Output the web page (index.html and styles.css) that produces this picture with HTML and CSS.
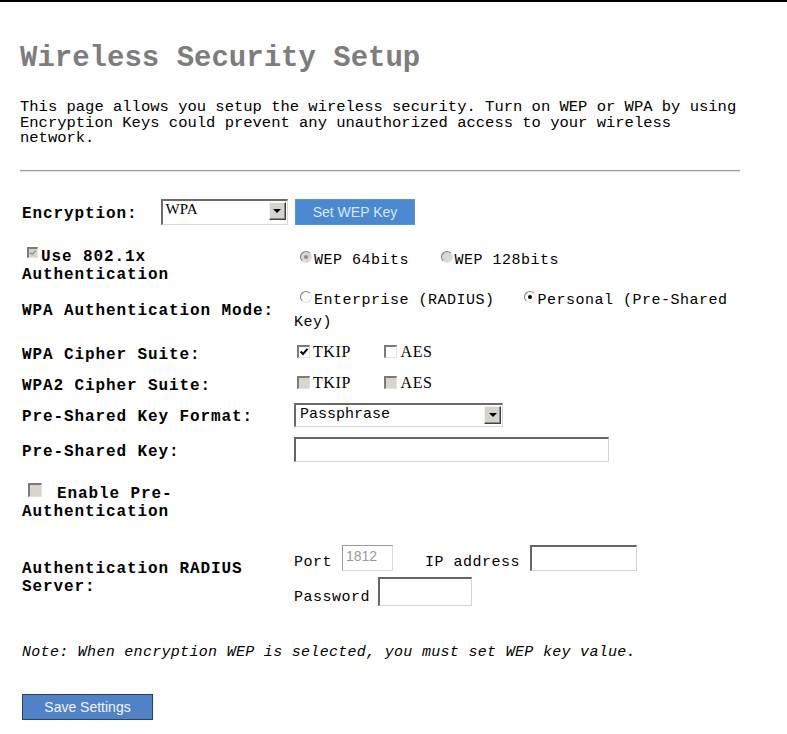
FILE: index.html
```html
<!DOCTYPE html>
<html>
<head>
<meta charset="utf-8">
<title>Wireless Security Setup</title>
<link rel="stylesheet" href="styles.css">
</head>
<body>
<div class="page">
  <h1 class="title">Wireless Security Setup</h1>
  <p class="intro">This page allows you setup the wireless security. Turn on WEP or WPA by using Encryption Keys could prevent any unauthorized access to your wireless network.</p>
  <div class="rule"></div>

  <div class="form">
    <div class="row r-enc">
      <div class="label enc-label">
        <span class="lt">Encryption:</span>
        <span class="sel sel-enc"><span class="sel-text">WPA</span><span class="arr"><i></i></span></span>
      </div>
      <div class="value"><span class="btn btn-wep">Set WEP Key</span></div>
    </div>

    <div class="row r-8021x">
      <div class="label"><span class="cb cb-small cb-dis on"><svg viewBox="0 0 10 10"><path d="M1.5 4.5 L4 7 L8.5 1.8" /></svg></span><span class="after-cb">Use 802.1x</span><br>Authentication</div>
      <div class="value v-wep">
        <span class="rd rd-dis on"></span><span class="opt-text">WEP 64bits</span>
        <span class="rd rd-dis rd-second"></span><span class="opt-text">WEP 128bits</span>
      </div>
    </div>

    <div class="row r-mode">
      <div class="label l-mode">WPA Authentication Mode:</div>
      <div class="value v-mode"><span class="rd rd-first"></span><span>Enterprise (RADIUS)</span><span class="gap"></span><span class="rd on"></span><span>Personal (Pre-Shared</span> <span>Key)</span></div>
    </div>

    <div class="row r-cipher">
      <div class="label">WPA Cipher Suite:</div>
      <div class="value v-cipher">
        <span class="cb on"><svg viewBox="0 0 10 10"><path d="M1.5 4.5 L4 7 L8.5 1.8" /></svg></span><span class="ck-text">TKIP</span>
        <span class="cb cb-second"></span><span class="ck-text">AES</span>
      </div>
    </div>

    <div class="row r-cipher2">
      <div class="label">WPA2 Cipher Suite:</div>
      <div class="value v-cipher">
        <span class="cb cb-dis"></span><span class="ck-text">TKIP</span>
        <span class="cb cb-dis cb-second"></span><span class="ck-text">AES</span>
      </div>
    </div>

    <div class="row r-format">
      <div class="label">Pre-Shared Key Format:</div>
      <div class="value"><span class="sel sel-format"><span class="sel-text">Passphrase</span><span class="arr"><i></i></span></span></div>
    </div>

    <div class="row r-psk">
      <div class="label">Pre-Shared Key:</div>
      <div class="value"><span class="field f-psk"></span></div>
    </div>

    <div class="row r-preauth">
      <div class="label"><span class="cb cb-dis cb-pre"></span><span class="after-cb2">Enable Pre-</span><br>Authentication</div>
      <div class="value"></div>
    </div>

    <div class="row r-radius">
      <div class="label">Authentication RADIUS<br>Server:</div>
      <div class="value v-radius">
        <div class="rline">
          <span class="rt">Port</span><span class="field f-port">1812</span>
          <span class="rt ip-label">IP address</span><span class="field f-ip"></span>
        </div>
        <div class="rline">
          <span class="rt">Password</span><span class="field f-pass"></span>
        </div>
      </div>
    </div>
  </div>

  <p class="note">Note: When encryption WEP is selected, you must set WEP key value.</p>

  <div class="save-wrap"><span class="btn btn-save">Save Settings</span></div>
</div>
</body>
</html>
```

FILE: styles.css
```css
html, body {
  margin: 0;
  padding: 0;
  background: #ffffff;
}

.page {
  border-top: 2px solid #000;
  padding: 0 0 0 20px;
  font-family: "Liberation Mono", "DejaVu Sans Mono", monospace;
  color: #000;
  height: 732px;
  box-sizing: border-box;
}

.title {
  margin: 41px 0 0 0;
  font-size: 29px;
  line-height: 32px;
  font-weight: bold;
  color: #7d7d7d;
  letter-spacing: 0;
}

.intro {
  margin: 25px 0 0 0;
  width: 722px;
  font-size: 15.5px;
  line-height: 15.5px;
}

.rule {
  margin-top: 23px;
  width: 720px;
  border-top: 1px solid #9c9c9c;
  border-bottom: 1px solid #e4e4e4;
}

.form {
  margin-top: 26px;
  padding-left: 2px;
  width: 718px;
}

.row {
  display: grid;
  grid-template-columns: 272px 446px;
  align-items: center;
}

.label {
  font-weight: bold;
  font-size: 16px;
  letter-spacing: 0.9px;
  line-height: 18px;
  white-space: nowrap;
  padding-top: 5px;
}

.value {
  font-size: 15px;
  letter-spacing: 0.5px;
  line-height: 22px;
}

/* row geometry */
.r-enc { height: 28px; }
.r-8021x { margin-top: 16px; height: 36px; }
.r-mode { margin-top: 10px; height: 44px; }
.r-cipher { margin-top: 9px; height: 24px; }
.r-cipher2 { margin-top: 7px; height: 24px; }
.r-format { margin-top: 7px; height: 24px; }
.r-psk { margin-top: 10px; height: 25px; }
.r-preauth { margin-top: 16px; height: 38px; }
.r-radius { margin-top: 29px; height: 60px; }

.enc-label {
  display: flex;
  align-items: center;
  gap: 23px;
  padding-top: 0;
}
.enc-label .lt {
  padding-top: 5px;
}

/* select boxes */
.sel {
  display: inline-flex;
  box-sizing: border-box;
  background: #fff;
  border-top: 2px solid #6a6a6a;
  border-left: 2px solid #6a6a6a;
  border-right: 1px solid #d8d8d8;
  border-bottom: 1px solid #d8d8d8;
  font-weight: normal;
  letter-spacing: 0;
  vertical-align: middle;
}
.sel-enc {
  width: 127px;
  height: 26px;
  font-family: "Liberation Serif", "Times New Roman", serif;
  font-size: 15px;
}
.sel-enc .sel-text {
  line-height: 15px;
  padding: 1px 0 0 3px;
  align-self: flex-start;
}
.sel-format {
  width: 209px;
  height: 24px;
  font-size: 15px;
}
.sel-format .sel-text {
  line-height: 20px;
  padding-left: 4px;
}
.sel-text {
  flex: 1;
  letter-spacing: 0;
}
.arr {
  width: 17px;
  height: 18px;
  margin: 1px 1px 0 0;
  box-sizing: border-box;
  background: #d6d3ce;
  border: 1px solid;
  border-color: #f4f4f4 #404040 #404040 #f4f4f4;
  box-shadow: inset -1px -1px 0 #8c8a86;
  display: flex;
  align-items: center;
  justify-content: center;
}
.arr i {
  display: block;
  width: 0;
  height: 0;
  border-left: 4px solid transparent;
  border-right: 4px solid transparent;
  border-top: 4px solid #000;
  margin-top: 1px;
}

/* buttons */
.btn {
  display: inline-flex;
  align-items: center;
  justify-content: center;
  box-sizing: border-box;
  font-family: "Liberation Sans", Arial, sans-serif;
  font-size: 14px;
  letter-spacing: 0;
  font-weight: normal;
}
.btn-wep {
  width: 120px;
  height: 26px;
  margin-left: 1px;
  background: #4a89d2;
  color: #dbe6f5;
  border: 1px solid #5c95d6;
}
.btn-save {
  width: 131px;
  height: 26px;
  background: #4f82c6;
  color: #f2f6fc;
  border: 1px solid #23446f;
}

/* checkboxes */
.cb {
  display: inline-block;
  width: 13px;
  height: 13px;
  box-sizing: border-box;
  border-top: 2px solid #7a7a7a;
  border-left: 2px solid #7a7a7a;
  border-right: 1px solid #e2e2e2;
  border-bottom: 1px solid #e2e2e2;
  background: #fff;
  vertical-align: -1px;
  position: relative;
}
.cb svg {
  position: absolute;
  left: 0;
  top: 0;
  width: 10px;
  height: 10px;
}
.cb svg path {
  fill: none;
  stroke: #000;
  stroke-width: 2;
}
.cb-dis {
  background: #d9d5cd;
}
.cb-small {
  width: 11px;
  height: 11px;
  margin-left: 5px;
  vertical-align: 3px;
}
.cb-small svg {
  width: 8px;
  height: 8px;
}
.cb-dis.on svg path {
  stroke: #9a9a9a;
}
.after-cb {
  margin-left: 3px;
}
.cb-pre {
  margin-left: 6px;
  width: 14px;
  height: 14px;
  vertical-align: 1px;
}
.after-cb2 {
  margin-left: 15px;
}

.v-cipher .cb {
  margin-left: 3px;
  margin-right: 3px;
}
.v-cipher .cb-second {
  margin-left: 24px;
}
.ck-text {
  font-family: "Liberation Serif", "Times New Roman", serif;
  font-size: 16px;
  letter-spacing: 0.6px;
}

/* radios */
.rd {
  display: inline-block;
  width: 12px;
  height: 12px;
  box-sizing: border-box;
  border-radius: 50%;
  border: 1px solid;
  border-color: #7c7c7c #e4e4e4 #e4e4e4 #7c7c7c;
  background: #fff;
  vertical-align: 1px;
  position: relative;
  margin-right: 2px;
}
.rd.on::after {
  content: "";
  position: absolute;
  left: 3px;
  top: 3px;
  width: 4px;
  height: 4px;
  border-radius: 50%;
  background: #000;
}
.rd-dis {
  background: #dcd8d0;
}
.rd-dis.on::after {
  background: #8a8a8a;
}
.v-wep {
  padding-bottom: 4px;
}
.v-wep .rd {
  margin-left: 6px;
}
.v-wep .rd-second {
  margin-left: 22px;
}
.v-mode {
  padding-top: 2px;
}
.v-mode .rd-first {
  margin-left: 6px;
}
.v-mode .gap {
  display: inline-block;
  width: 29px;
}
.l-mode {
  padding-bottom: 4px;
}

/* text fields */
.field {
  display: inline-block;
  box-sizing: border-box;
  background: #fff;
  border-top: 2px solid #646464;
  border-left: 2px solid #646464;
  border-right: 1px solid #d4d4d4;
  border-bottom: 1px solid #d4d4d4;
  vertical-align: middle;
}
.f-psk {
  width: 315px;
  height: 25px;
}
.v-radius {
  display: flex;
  flex-direction: column;
  gap: 6px;
}
.rline {
  display: flex;
  align-items: flex-end;
}
.rt {
  line-height: 16px;
}
.f-port {
  width: 51px;
  height: 26px;
  margin-left: 10px;
  border-color: #9a9a9a #dadada #dadada #9a9a9a;
  border-width: 1px;
  color: #9a9a9a;
  font-family: "Liberation Sans", Arial, sans-serif;
  font-size: 14px;
  letter-spacing: 0;
  line-height: 20px;
  padding-left: 3px;
}
.ip-label {
  margin-left: 32px;
}
.f-ip {
  width: 107px;
  height: 26px;
  margin-left: 10px;
}
.f-pass {
  width: 94px;
  height: 29px;
  margin-left: 8px;
}

.note {
  margin: 39px 0 0 2px;
  font-style: italic;
  font-size: 15px;
  letter-spacing: 0.3px;
  line-height: 18px;
}

.save-wrap {
  margin-top: 32px;
  padding-left: 2px;
}
```
